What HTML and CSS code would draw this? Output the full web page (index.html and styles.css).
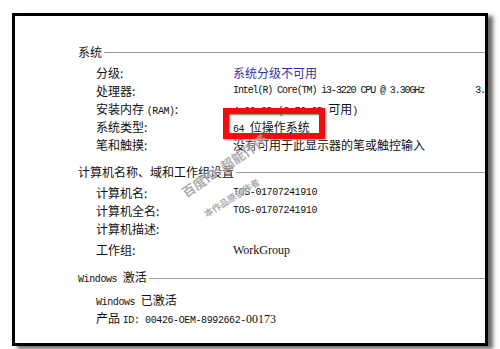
FILE: index.html
```html
<!DOCTYPE html>
<html lang="zh-CN">
<head>
<meta charset="utf-8">
<title>系统</title>
<link rel="stylesheet" href="styles.css">
</head>
<body>
<div class="frame">
  <section class="sec sec-sys">
    <div class="head"><span>系统</span></div>
    <div class="rows">
      <div class="label">分级:</div><div class="value link">系统分级不可用</div>
      <div class="label">处理器:</div><div class="value mono cpu">Intel(R) Core(TM) i3-3220 CPU @ 3.30GHz<span class="gap"></span>3.30 GHz</div>
      <div class="label">安装内存 <span class="mono">(RAM)</span>:</div><div class="value"><span class="mono">4.00 GB (3.70 GB </span>可用<span class="mono">)</span></div>
      <div class="label">系统类型:</div><div class="value"><span class="mono">64 </span>位操作系统</div>
      <div class="label">笔和触摸:</div><div class="value">没有可用于此显示器的笔或触控输入</div>
    </div>
  </section>
  <section class="sec sec-pc">
    <div class="head"><span>计算机名称、域和工作组设置</span></div>
    <div class="rows">
      <div class="label">计算机名:</div><div class="value mono">TOS-01707241910</div>
      <div class="label">计算机全名:</div><div class="value mono">TOS-01707241910</div>
      <div class="label">计算机描述:</div><div class="value"></div>
      <div class="label wg">工作组:</div><div class="value serif wg">WorkGroup</div>
    </div>
  </section>
  <section class="sec sec-win">
    <div class="head"><span><span class="mono">Windows </span>激活</span></div>
    <div class="rows single">
      <div class="label"><span class="mono">Windows </span>已激活</div>
      <div class="label">产品 <span class="mono">ID: 00426-OEM-8992662-</span><span class="serif">00173</span></div>
    </div>
  </section>
  <div class="redbox"></div>
  <div class="wm wm1">百度ID: 超能仟仟</div>
  <div class="wm wm2">本作品原创作者</div>
</div>
</body>
</html>
```
FILE: styles.css
```css
html, body {
  margin: 0;
  padding: 0;
  background: #fff;
}
body {
  font-family: "Noto Sans CJK SC", "Liberation Sans", sans-serif;
  font-size: 12px;
  color: #111;
  width: 500px;
  height: 349px;
  overflow: hidden;
}
.frame {
  position: relative;
  margin: 13px 0 0 12px;
  border: 3px solid #000;
  background: #fff;
  box-shadow: 5px 3px 4px #6a6a6a;
  overflow: hidden;
  padding: 27px 0 0 63px;
  box-sizing: content-box;
  width: 407px;
  height: 300px;
}
.sec {
  display: flex;
  flex-direction: column;
}
.head {
  display: flex;
  align-items: center;
  height: 18px;
  line-height: 18px;
  white-space: nowrap;
}
.head::after {
  content: "";
  flex: 1;
  border-top: 1px solid #9c9c9c;
  margin-left: 2px;
}
.rows {
  display: grid;
  grid-template-columns: 137px 1fr;
  grid-auto-rows: 18px;
  line-height: 18px;
  padding-left: 18px;
  margin-top: 3px;
}
.rows.single {
  grid-template-columns: 1fr;
  margin-top: 4px;
}
.value {
  white-space: nowrap;
}
.link {
  color: #3232a6;
}
.mono {
  font-family: "Liberation Mono", monospace;
  font-size: 10px;
  letter-spacing: -0.4px;
}
.cpu {
  letter-spacing: -1.1px;
}
.gap {
  display: inline-block;
  width: 51px;
}
.serif {
  font-family: "Liberation Serif", serif;
  font-size: 12px;
  letter-spacing: 0;
}
.wg {
  margin-top: 3px;
}
.sec-pc {
  margin-top: 9px;
}
.sec-win {
  margin-top: 13px;
}
.redbox {
  position: absolute;
  left: 208px;
  top: 92px;
  width: 90px;
  height: 19px;
  border: 6px solid #f00d0d;
  box-shadow: inset 1px 1px 2px #777, 1px 1px 2px #999;
}
.wm {
  position: absolute;
  color: #9a9a9a;
  font-weight: 700;
  white-space: nowrap;
  text-shadow: 0 0 2px #fff, 0 0 1px #fff;
  transform-origin: left center;
  opacity: 0.8;
}
.wm1 {
  left: 168px;
  top: 168px;
  font-size: 13px;
  transform: rotate(-34deg);
}
.wm2 {
  left: 190px;
  top: 192px;
  font-size: 9px;
  transform: rotate(-32deg);
}
```
